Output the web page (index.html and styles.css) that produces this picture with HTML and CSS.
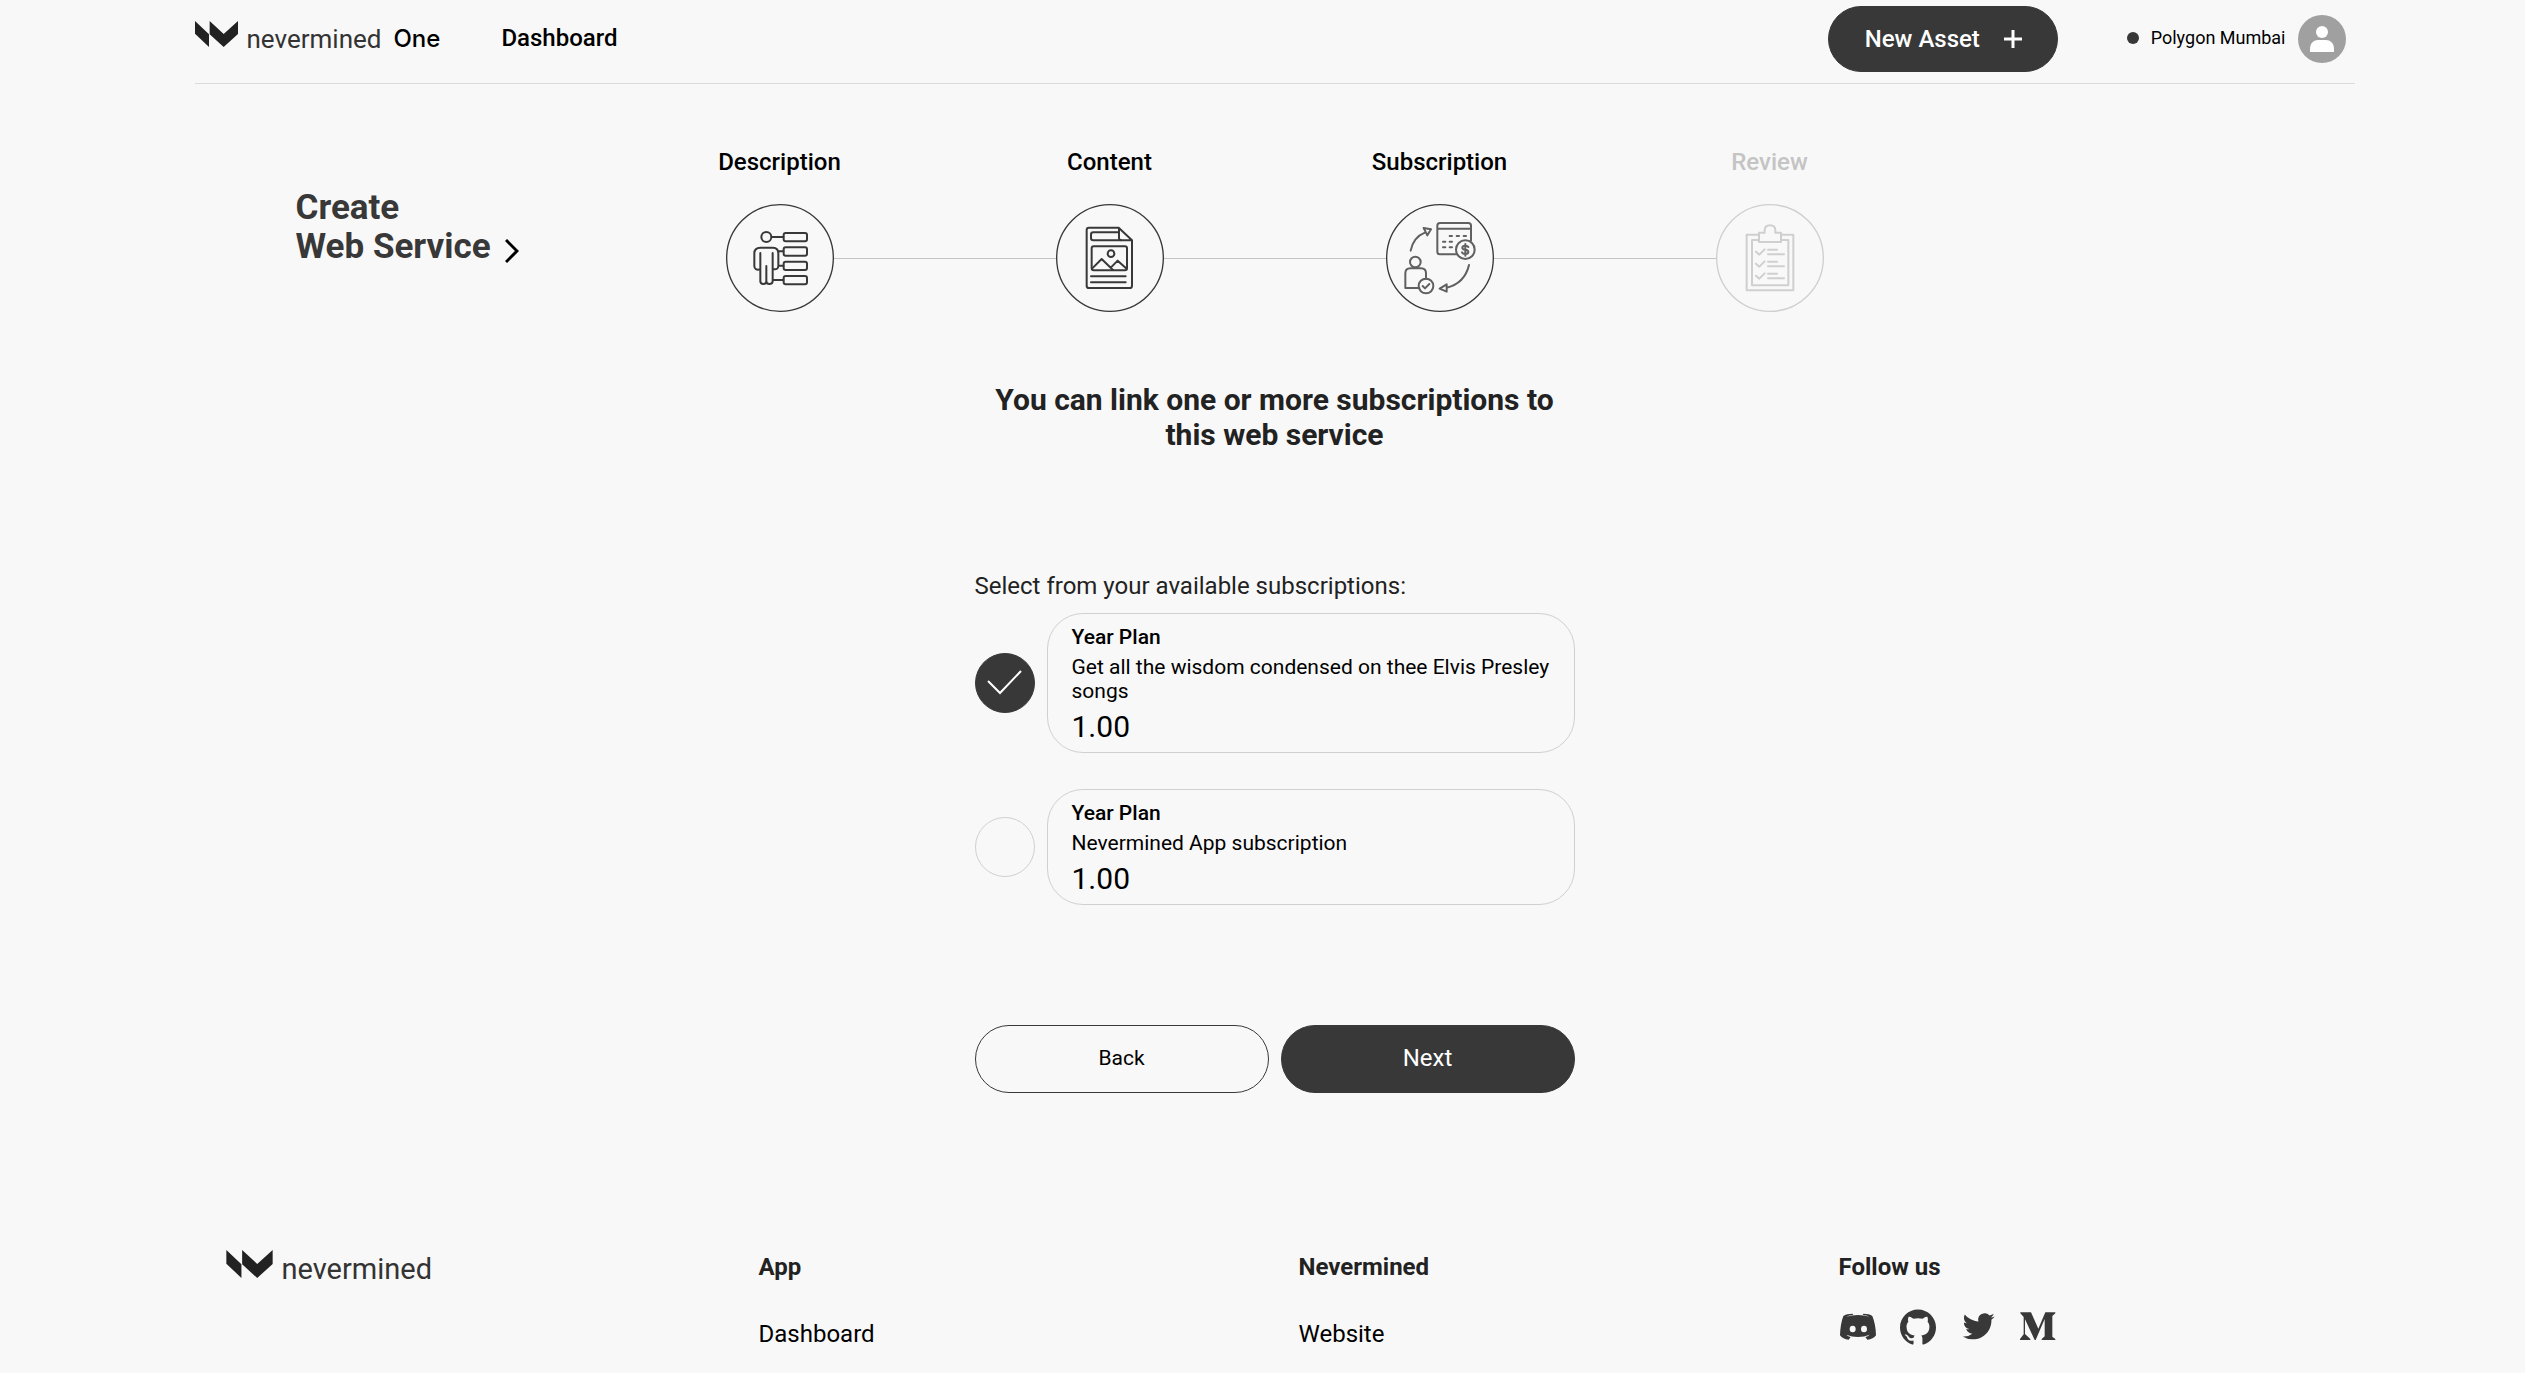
FILE: index.html
```html
<!DOCTYPE html>
<html lang="en">
<head>
<meta charset="utf-8">
<meta name="viewport" content="width=device-width, initial-scale=1">
<title>Create Web Service - Nevermined One</title>
<link rel="stylesheet" href="styles.css">
</head>
<body>
<header class="container header">
  <a class="brand" href="#">
    <svg class="brand-mark" viewBox="45 63 129 78" aria-hidden="true"><path d="M45 63 87 103V141L45 101ZM89 63 131 102 174 63V102L131 141 89 103Z"/></svg>
    <span class="brand-word">nevermined</span>
    <span class="brand-suffix">One</span>
  </a>
  <nav class="nav"><a href="#">Dashboard</a></nav>
  <button class="button button-dark new-asset" type="button">New Asset
    <svg class="plus" viewBox="0 0 18 18" aria-hidden="true"><path d="M9 0V18M0 9H18"/></svg>
  </button>
  <div class="network"><span class="network-dot"></span>Polygon Mumbai</div>
  <button class="avatar" type="button" aria-label="Account">
    <svg viewBox="0 0 48 48" aria-hidden="true"><circle cx="24" cy="17" r="6"/><path d="M12 37V34C12 28 16 25 20 25H28C32 25 36 28 36 34V37Z"/></svg>
  </button>
</header>

<main class="container">
  <div class="wizard-head">
    <h1 class="title"><span>Create<br>Web Service</span>
      <svg class="chevron" viewBox="0 0 14 24" aria-hidden="true"><path d="M1 1 12 12 1 23"/></svg>
    </h1>
    <ol class="steps">
      <li class="step">
        <span class="step-label">Description</span>
        <span class="step-row">
          <svg class="step-icon" viewBox="46 42 324 324" aria-hidden="true">
            <circle class="ring" cx="208" cy="204" r="160"/>
            <circle cx="167" cy="141" r="15"/>
            <path d="M183 141H218M202 184H218M206 227H218M187 270H218"/>
            <rect x="219" y="129" width="70" height="25" rx="6"/><rect x="219" y="172" width="70" height="25" rx="6"/><rect x="219" y="215" width="70" height="25" rx="6"/><rect x="219" y="258" width="70" height="25" rx="6"/>
            <path d="M149 189V274Q149 282 158 282Q167 282 167 274V228M167 274Q167 282 176 282Q186 282 186 274V189M149 238Q131 242 131 228V190Q131 173 149 173H187Q203 173 203 190V228Q203 240 187 237"/>
          </svg>
        </span>
      </li>
      <li class="step">
        <span class="step-label">Content</span>
        <span class="step-row">
          <svg class="step-icon" viewBox="45 192 324 324" aria-hidden="true">
            <circle class="ring" cx="207" cy="354" r="160"/>
            <path d="M233 263H144Q137 263 137 270V437Q137 444 144 444H266Q273 444 273 437V301ZM234 264V294Q234 301 241 301H273"/>
            <path d="M232 277H157Q150 277 150 284V294Q150 301 157 301H240M150 409H254M150 427H254"/>
            <rect x="152" y="319" width="106" height="72" rx="6"/><circle cx="210" cy="341" r="10"/>
            <path d="M153 386 182 357 216 390M210 382 230 362 257 386"/>
          </svg>
        </span>
      </li>
      <li class="step">
        <span class="step-label">Subscription</span>
        <span class="step-row">
          <svg class="step-icon step-icon-soft" viewBox="77 192 324 324" aria-hidden="true">
            <circle class="ring" cx="239" cy="354" r="160"/>
            <path d="M288 343H239Q231 343 231 335V257Q231 249 239 249H324Q332 249 332 257V302M231 266H332"/>
            <path d="M268 288H275M289 288H296M310 288H317M248 305H255M268 305H275M248 322H255M268 322H275"/>
            <circle cx="315" cy="329" r="28"/>
            <path d="M324 321Q322 317 315 317Q306 317 306 323Q306 328 315 329Q324 330 324 336Q324 342 315 342Q307 342 305 337M315 312V347"/>
            <circle cx="165" cy="366" r="16"/>
            <path d="M177 444H135V400Q135 385 150 385H182Q197 385 197 400V416"/>
            <circle cx="197" cy="438" r="22"/><path d="M187 438 194 445 207 432"/>
            <path d="M151 332Q159 291 195 277M190 264 212 268 201 286ZM326 375Q313 430 259 443M259 433 238 446 259 455Z"/>
          </svg>
        </span>
      </li>
      <li class="step step-pending">
        <span class="step-label">Review</span>
        <span class="step-row">
          <svg class="step-icon" viewBox="48 192 324 324" aria-hidden="true">
            <circle class="ring" cx="210" cy="354" r="160"/>
            <path d="M176 284H140V451H280V284H244M176 300H156V436H265V300H244"/>
            <path d="M177 306V278H194V271Q194 256 210 256Q226 256 226 271V278H243V306Z"/>
            <path d="M204 329H231M204 343H252M204 365H231M204 379H252M204 401H231M204 415H252M168 335 178 344 194 328M168 371 178 380 194 364M168 407 178 416 194 400"/>
          </svg>
        </span>
      </li>
    </ol>
  </div>

  <form class="form">
    <h2 class="form-title">You can link one or more subscriptions to this web service</h2>
    <fieldset class="plans">
      <legend class="plans-legend">Select from your available subscriptions:</legend>
      <label class="plan">
        <span class="tick"><input type="checkbox" checked>
          <svg viewBox="0 0 60 60" aria-hidden="true"><path d="M13 28 25 40 46 18"/></svg></span>
        <span class="plan-card">
          <strong class="plan-name">Year Plan</strong>
          <span class="plan-text">Get all the wisdom condensed on thee Elvis Presley songs</span>
          <span class="plan-price">1.00</span>
        </span>
      </label>
      <label class="plan">
        <span class="tick"><input type="checkbox">
          <svg viewBox="0 0 60 60" aria-hidden="true"><path d="M13 28 25 40 46 18"/></svg></span>
        <span class="plan-card">
          <strong class="plan-name">Year Plan</strong>
          <span class="plan-text">Nevermined App subscription</span>
          <span class="plan-price">1.00</span>
        </span>
      </label>
    </fieldset>
    <div class="actions">
      <button class="button button-outline" type="button">Back</button>
      <button class="button button-dark" type="button">Next</button>
    </div>
  </form>
</main>

<footer class="container footer">
  <a class="brand brand-footer" href="#">
    <svg class="brand-mark" viewBox="45 63 129 78" aria-hidden="true"><path d="M45 63 87 103V141L45 101ZM89 63 131 102 174 63V102L131 141 89 103Z"/></svg>
    <span class="brand-word">nevermined</span>
  </a>
  <section>
    <h3 class="footer-title">App</h3>
    <a class="footer-link" href="#">Dashboard</a>
  </section>
  <section>
    <h3 class="footer-title">Nevermined</h3>
    <a class="footer-link" href="#">Website</a>
  </section>
  <section>
    <h3 class="footer-title">Follow us</h3>
    <div class="social">
      <a href="#" aria-label="Discord"><svg viewBox="30 25 108 108" aria-hidden="true"><path fill-rule="evenodd" d="M40 46Q50 39 68 39L70 42Q56 43 49 48Q65 43 84 43Q103 43 118 48Q111 43 98 42L100 39Q118 39 127 46Q137 70 138 104Q130 116 112 117L106 109Q114 107 119 102Q103 109 84 109Q65 109 49 102Q54 107 62 109L56 117Q38 116 30 104Q31 70 40 46ZM68 75A9 10 0 1 0 68 95A9 10 0 1 0 68 75ZM102 75A9 10 0 1 0 102 95A9 10 0 1 0 102 75Z"/></svg></a>
      <a href="#" aria-label="GitHub"><svg viewBox="0 0 24 24" aria-hidden="true"><path d="M12 .297c-6.63 0-12 5.373-12 12 0 5.303 3.438 9.8 8.205 11.385.6.113.82-.258.82-.577 0-.285-.01-1.04-.015-2.04-3.338.724-4.042-1.61-4.042-1.61C4.422 18.07 3.633 17.7 3.633 17.7c-1.087-.744.084-.729.084-.729 1.205.084 1.838 1.236 1.838 1.236 1.07 1.835 2.809 1.305 3.495.998.108-.776.417-1.305.76-1.605-2.665-.3-5.466-1.332-5.466-5.93 0-1.31.465-2.38 1.235-3.22-.135-.303-.54-1.523.105-3.176 0 0 1.005-.322 3.3 1.23.96-.267 1.98-.399 3-.405 1.02.006 2.04.138 3 .405 2.28-1.552 3.285-1.23 3.285-1.23.645 1.653.24 2.873.12 3.176.765.84 1.23 1.91 1.23 3.22 0 4.61-2.805 5.625-5.475 5.92.42.36.81 1.096.81 2.22 0 1.606-.015 2.896-.015 3.286 0 .315.21.69.825.57C20.565 22.092 24 17.592 24 12.297c0-6.627-5.373-12-12-12"/></svg></a>
      <a href="#" aria-label="Twitter"><svg viewBox="-2 -1 27 27" aria-hidden="true"><path d="M23.953 4.57a10 10 0 01-2.825.775 4.958 4.958 0 002.163-2.723c-.951.555-2.005.959-3.127 1.184a4.92 4.92 0 00-8.384 4.482C7.69 8.095 4.067 6.13 1.64 3.162a4.822 4.822 0 00-.666 2.475c0 1.71.87 3.213 2.188 4.096a4.904 4.904 0 01-2.228-.616v.06a4.923 4.923 0 003.946 4.827 4.996 4.996 0 01-2.212.085 4.936 4.936 0 004.604 3.417 9.867 9.867 0 01-6.102 2.105c-.39 0-.779-.023-1.17-.067a13.995 13.995 0 007.557 2.209c9.053 0 13.998-7.496 13.998-13.985 0-.21 0-.42-.015-.63A9.935 9.935 0 0024 4.59z"/></svg></a>
      <a href="#" aria-label="Medium"><svg viewBox="570 26 108 108" aria-hidden="true"><path d="M571 36H603L625 85 646 36H676V39L667 47V109L676 116V119H635V116L644 108V56L617 119H614L585 57V101L601 116V119H570V116L581 102V50L571 39Z"/></svg></a>
    </div>
  </section>
</footer>
</body>
</html>
```
FILE: styles.css
```css
* {
  box-sizing: border-box;
}

body {
  margin: 0;
  padding-left: 24px;
  background: #f8f8f8;
  color: #000;
  font-family: Roboto, "Liberation Sans", sans-serif;
  font-size: 24px;
  line-height: 28px;
}

a {
  color: inherit;
  text-decoration: none;
}

button {
  font: inherit;
  cursor: pointer;
}

svg {
  display: block;
}

.container {
  max-width: 2160px;
  margin: 0 auto;
}

/* Header */
.header {
  display: flex;
  align-items: center;
  height: 84px;
  padding: 0 9px 6px 0;
  border-bottom: 1px solid #dcdcdc;
}

.brand {
  display: flex;
  align-items: center;
}

.brand-mark {
  width: 43px;
  height: 26px;
  margin: 0 9px 10px 0;
  fill: #222;
}

.brand-word {
  color: #333;
  font-size: 26px;
  line-height: 32px;
}

.brand-suffix {
  margin-left: 12px;
  font-family: Inter, Roboto, sans-serif;
  font-weight: 500;
}

.nav {
  margin: 0 auto 0 61px;
  padding-bottom: 2px;
  font-weight: 500;
}

.button {
  height: 68px;
  padding-bottom: 3px;
  border: 1px solid #383838;
  border-radius: 36px;
}

.button-dark {
  background: #383838;
  color: #fff;
}

.button-outline {
  background: none;
  color: #000;
  font-size: 21px;
}

.new-asset {
  display: flex;
  align-items: center;
  justify-content: space-between;
  width: 230px;
  height: 66px;
  padding: 0 35px 0 36px;
  font-weight: 500;
}

.plus {
  width: 18px;
  height: 18px;
  fill: none;
  stroke: #fff;
  stroke-width: 3;
}

.network {
  display: flex;
  align-items: center;
  gap: 12px;
  margin: 0 12px 0 69px;
  padding-bottom: 2px;
  font-size: 18px;
}

.network-dot {
  width: 12px;
  height: 12px;
  border-radius: 50%;
  background: #383838;
}

.avatar {
  width: 48px;
  height: 48px;
  padding: 0;
  border: 0;
  border-radius: 50%;
  background: #a0a0a0;
}

.avatar svg {
  fill: #fff;
}

/* Wizard heading and steps */
.wizard-head {
  display: grid;
  grid-template-columns: 1fr auto 1fr;
  padding-top: 64px;
}

.title {
  display: flex;
  align-items: flex-end;
  gap: 14px;
  align-self: start;
  margin: 0;
  padding: 40px 0 0 101px;
  color: #383838;
  font-size: 35px;
  line-height: 39px;
}

.chevron {
  width: 14px;
  height: 24px;
  margin-bottom: 3px;
  fill: none;
  stroke: #000;
  stroke-width: 3;
}

.steps {
  display: grid;
  grid-template-columns: repeat(4, 330px);
  margin: 0;
  padding: 0;
  list-style: none;
}

.step {
  display: flex;
  flex-direction: column;
  gap: 28px;
  font-weight: 500;
  text-align: center;
}

.step-row {
  display: flex;
  align-items: center;
}

.step-row::before,
.step-row::after {
  content: "";
  flex: 1;
  height: 1px;
  background: #c4c4c4;
}

.step:first-child .step-row::before,
.step:last-child .step-row::after {
  background: none;
}

.step-icon {
  width: 108px;
  height: 108px;
  fill: none;
  stroke: #383838;
  stroke-width: 6;
  stroke-linecap: round;
  stroke-linejoin: round;
}

.step-icon-soft {
  stroke: #606060;
}

.ring {
  stroke: #383838;
  stroke-width: 4;
}

.step-pending {
  color: #c4c4c4;
}

.step-pending .step-icon,
.step-pending .ring {
  stroke: #cfcfcf;
}

/* Subscription form */
.form {
  max-width: 600px;
  margin: 70px auto 0;
}

.form-title {
  margin: 0 0 120px;
  padding: 0 12px;
  color: #222;
  font-size: 30px;
  line-height: 35px;
  text-align: center;
}

.plans {
  display: flex;
  flex-direction: column;
  gap: 36px;
  min-width: 0;
  margin: 0;
  padding: 0;
  border: 0;
}

.plans-legend {
  padding: 0 0 13px;
  color: #222;
}

.plan {
  display: flex;
  align-items: center;
  gap: 12px;
}

.tick {
  display: grid;
  flex: none;
  width: 60px;
  height: 60px;
}

.tick > * {
  grid-area: 1 / 1;
}

.tick input {
  appearance: none;
  width: 60px;
  height: 60px;
  margin: 0;
  border: 1px solid #d0d0d0;
  border-radius: 50%;
}

.tick input:checked {
  border-color: #383838;
  background: #383838;
}

.tick svg {
  visibility: hidden;
  fill: none;
  stroke: #fff;
  stroke-width: 2;
  pointer-events: none;
}

.tick input:checked + svg {
  visibility: visible;
}

.plan-card {
  display: flex;
  flex: 1;
  flex-direction: column;
  gap: 6px;
  padding: 11px 20px 8px 24px;
  border: 1px solid #d0d0d0;
  border-radius: 36px;
  font-size: 21px;
  line-height: 24px;
}

.plan-name {
  font-weight: 500;
}

.plan-price {
  font-size: 30px;
  line-height: 35px;
}

.actions {
  display: grid;
  grid-template-columns: 1fr 1fr;
  gap: 12px;
  margin-top: 120px;
}

/* Footer */
.footer {
  display: grid;
  grid-template-columns: repeat(4, 1fr);
  align-items: start;
  padding: 160px 0 24px;
}

.footer > * {
  padding-left: 24px;
}

.footer .brand-footer {
  margin-top: -3px;
  padding-left: 31px;
}

.brand-footer .brand-mark {
  width: 47px;
  height: 28px;
}

.brand-footer .brand-word {
  font-size: 29px;
}

.footer-title {
  margin: 0;
  color: #222;
  font-size: 24px;
}

.footer-link {
  display: inline-block;
  margin-top: 39px;
}

.social {
  display: flex;
  gap: 24px;
  margin: 28px 0 0 1px;
}

.social svg {
  width: 36px;
  height: 36px;
  fill: #383838;
}
```
